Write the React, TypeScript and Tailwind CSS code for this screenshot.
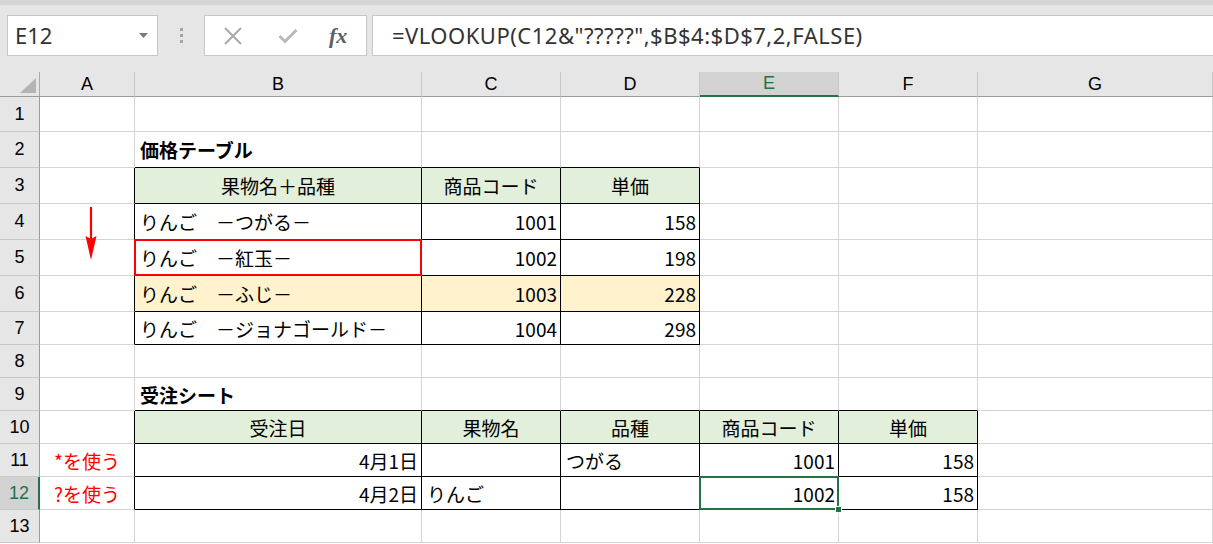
import React from "react";

type Cell = {
  t: string;
  align?: "l" | "c" | "r";
  bold?: boolean;
  fill?: string;
  red?: boolean;
};

const COLS = ["A", "B", "C", "D", "E", "F", "G"];
const colW = ["w-[95px]", "w-[287px]", "w-[139px]", "w-[139px]", "w-[139px]", "w-[139px]", "w-[235px]"];
const rowH = [
  "h-[35px]", "h-[36px]", "h-[36px]", "h-[36px]", "h-[36px]", "h-[36px]", "h-[33px]",
  "h-[33px]", "h-[33px]", "h-[33px]", "h-[33px]", "h-[33px]", "h-[33px]",
];

const GREEN = "bg-[#e2efda]";
const YELLOW = "bg-[#fff2cc]";

const cells: Record<string, Cell> = {
  B2: { t: "価格テーブル", bold: true },
  B3: { t: "果物名＋品種", align: "c", fill: GREEN },
  C3: { t: "商品コード", align: "c", fill: GREEN },
  D3: { t: "単価", align: "c", fill: GREEN },
  B4: { t: "りんご　－つがる－" },
  C4: { t: "1001", align: "r" },
  D4: { t: "158", align: "r" },
  B5: { t: "りんご　－紅玉－" },
  C5: { t: "1002", align: "r" },
  D5: { t: "198", align: "r" },
  B6: { t: "りんご　－ふじ－", fill: YELLOW },
  C6: { t: "1003", align: "r", fill: YELLOW },
  D6: { t: "228", align: "r", fill: YELLOW },
  B7: { t: "りんご　－ジョナゴールド－" },
  C7: { t: "1004", align: "r" },
  D7: { t: "298", align: "r" },
  B9: { t: "受注シート", bold: true },
  B10: { t: "受注日", align: "c", fill: GREEN },
  C10: { t: "果物名", align: "c", fill: GREEN },
  D10: { t: "品種", align: "c", fill: GREEN },
  E10: { t: "商品コード", align: "c", fill: GREEN },
  F10: { t: "単価", align: "c", fill: GREEN },
  A11: { t: "*を使う", align: "c", red: true },
  B11: { t: "4月1日", align: "r" },
  D11: { t: "つがる" },
  E11: { t: "1001", align: "r" },
  F11: { t: "158", align: "r" },
  A12: { t: "?を使う", align: "c", red: true },
  B12: { t: "4月2日", align: "r" },
  C12: { t: "りんご" },
  E12: { t: "1002", align: "r" },
  F12: { t: "158", align: "r" },
};

// c: 0 = A, r: 1-based row
function inTable(c: number, r: number) {
  return (c >= 1 && c <= 3 && r >= 3 && r <= 7) || (c >= 1 && c <= 5 && r >= 10 && r <= 12);
}

function Toolbar() {
  return (
    <div className="h-[72px] shrink-0 border-t-[5px] border-t-[#d5d5d5] bg-[#e6e6e6] pt-[10px]">
      <div className="flex h-[41px] items-stretch">
        <div className="ml-[7px] flex w-[151px] items-center justify-between border border-[#c6c6c6] bg-white pl-[7px] pr-[9px] font-['Noto_Sans',sans-serif] text-[22px] text-[#333]">
          <span>E12</span>
          <svg width="9" height="5" viewBox="0 0 9 5">
            <polygon points="0,0 9,0 4.5,5" fill="#7a7a7a" />
          </svg>
        </div>
        <div className="flex w-[46px] flex-col items-center justify-center gap-[3px]">
          <span className="h-[3px] w-[3px] bg-[#a6a6a6]" />
          <span className="h-[3px] w-[3px] bg-[#a6a6a6]" />
          <span className="h-[3px] w-[3px] bg-[#a6a6a6]" />
        </div>
        <div className="relative flex w-[163px] items-center border border-[#c6c6c6] bg-white">
          <svg className="ml-[19px]" width="18" height="18" viewBox="0 0 18 18">
            <path d="M1 1 L17 17 M17 1 L1 17" stroke="#a9a9a9" strokeWidth="2" />
          </svg>
          <svg className="ml-[36px]" width="20" height="16" viewBox="0 0 20 16">
            <path d="M1.5 8 L7 13.5 L18.5 2" stroke="#b9b9b9" strokeWidth="3" fill="none" />
          </svg>
          <span className="ml-[31px] font-['Liberation_Serif',serif] text-[22px] font-bold italic leading-none text-[#5f5f5f]">
            fx
          </span>
        </div>
        <div className="ml-[5px] flex flex-1 items-center border border-r-0 border-[#c6c6c6] bg-white pl-[19px] font-['Noto_Sans',sans-serif] text-[22px] tracking-[0.5px] text-[#333]">
          =VLOOKUP(C12&amp;"?????",$B$4:$D$7,2,FALSE)
        </div>
      </div>
    </div>
  );
}

function HeaderRow() {
  return (
    <div className="flex h-[25px] shrink-0 bg-[#e6e6e6] font-['Liberation_Sans',sans-serif] text-[18px]">
      <div className="relative w-[40px] shrink-0 border-r border-b border-r-[#ababab] border-b-[#9c9c9c]">
        <svg className="absolute right-[3px] bottom-[3px]" width="16" height="15" viewBox="0 0 16 15">
          <polygon points="16,0 16,15 0,15" fill="#b4b4b4" />
        </svg>
      </div>
      {COLS.map((c, i) => {
        const sel = c === "E";
        return (
          <div
            key={c}
            className={`${colW[i]} flex shrink-0 items-center justify-center border-r border-r-[#c8c8c8] ${
              sel ? "border-b-2 border-b-[#217346] bg-[#d2d2d2] text-[#217346]" : "border-b border-b-[#9c9c9c] text-black"
            }`}
          >
            {c}
          </div>
        );
      })}
    </div>
  );
}

function SheetRow({ r }: { r: number }) {
  const sel = r === 12;
  return (
    <div className={`flex ${rowH[r - 1]} shrink-0`}>
      <div
        className={`flex w-[40px] shrink-0 items-center justify-center border-b border-b-[#c8c8c8] font-['Liberation_Sans',sans-serif] text-[18px] ${
          sel ? "border-r-2 border-r-[#217346] bg-[#d2d2d2] text-[#217346]" : "border-r border-r-[#9c9c9c] bg-[#e6e6e6] text-black"
        }`}
      >
        {r}
      </div>
      {COLS.map((c, i) => {
        const key = `${c}${r}`;
        const cell = cells[key];
        const right = inTable(i, r) || inTable(i + 1, r) ? "border-r-black" : "border-r-[#d4d4d4]";
        const bottom = inTable(i, r) || inTable(i, r + 1) ? "border-b-black" : "border-b-[#d4d4d4]";
        const align =
          cell?.align === "r" ? "justify-end pr-[3px]" : cell?.align === "c" ? "justify-center" : "justify-start pl-[5px]";
        return (
          <div
            key={key}
            className={`relative ${colW[i]} flex shrink-0 items-center border-r border-b ${right} ${bottom} ${
              cell?.fill ?? "bg-white"
            } ${align} font-['Noto_Sans_CJK_JP',sans-serif] text-[19px] whitespace-nowrap ${
              cell?.red ? "text-[#ff0000]" : "text-black"
            } ${cell?.bold ? "font-bold" : ""}`}
          >
            {cell && <span className="pt-[2px]">{cell.t}</span>}
            {key === "A4" && (
              <svg className="absolute top-[3px] left-[45px] z-10" width="12" height="53" viewBox="0 0 12 53">
                <path d="M6 0 L6 32" stroke="#ff0000" strokeWidth="2.2" />
                <polygon points="0.5,29 6,32 11.5,29 6,53" fill="#ff0000" />
              </svg>
            )}
            {key === "B5" && (
              <div className="pointer-events-none absolute top-[-1px] left-[-1px] right-[-1px] bottom-[-1px] z-10 border-2 border-[#ff0000]" />
            )}
            {key === "E12" && (
              <div className="pointer-events-none absolute top-[-1px] left-[-1px] right-[-1px] bottom-[-1px] z-10 border-2 border-[#217346]">
                <div className="absolute right-[-5px] bottom-[-5px] h-[7px] w-[7px] border border-white bg-[#217346]" />
              </div>
            )}
          </div>
        );
      })}
    </div>
  );
}

export default function App() {
  const rows = Array.from({ length: 13 }, (_, i) => i + 1);
  return (
    <div className="flex h-[544px] w-[1213px] flex-col overflow-hidden bg-white">
      <Toolbar />
      <HeaderRow />
      {rows.map((r) => (
        <SheetRow key={r} r={r} />
      ))}
    </div>
  );
}
